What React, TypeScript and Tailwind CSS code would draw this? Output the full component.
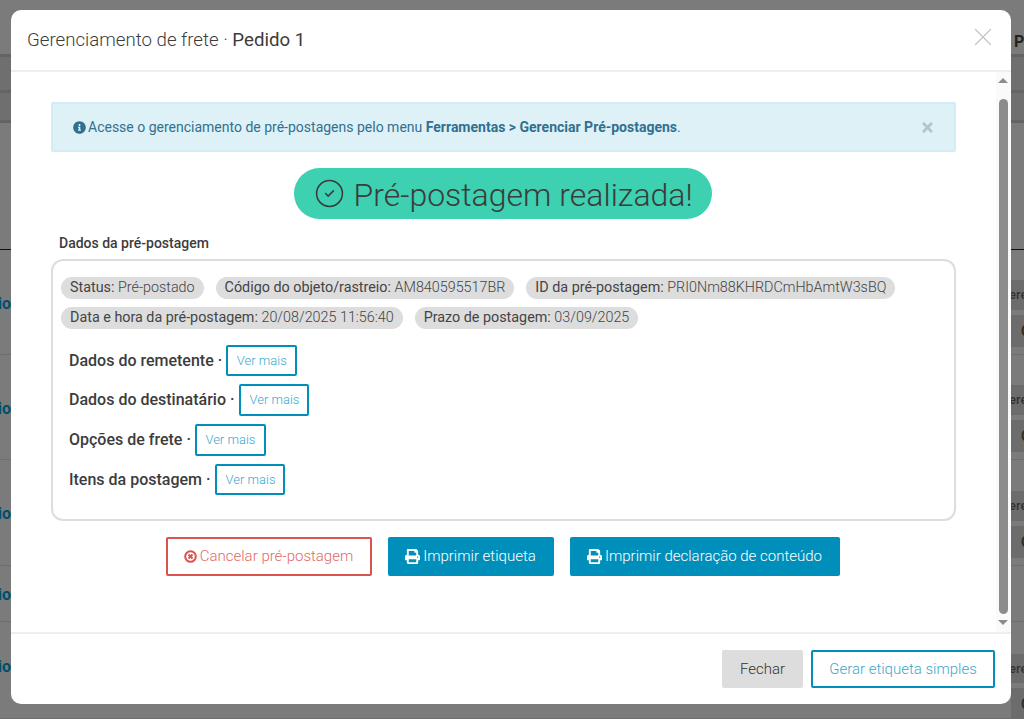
import React from 'react';
import { X, CircleCheck } from 'lucide-react';
import { FaInfoCircle, FaPrint, FaTimes } from 'react-icons/fa';

const BLUE_OUTLINE = 'border-2 border-[#008fbb] rounded-[2px] bg-white text-[#3ba8cd] font-light';

// page behind the overlay, only the strips at the sides stay visible
const backRows = [
  { h: 'h-[47px]', line: 'border-b-[3px] border-[#646464]' },
  { h: 'h-[36px]', line: 'border-b-[3px] border-[#646464] bg-[#6f6f6f]' },
  { h: 'h-[30px]', line: 'border-b-[3px] border-[#646464] bg-[#6f6f6f]' },
  { h: 'h-[73px]', line: 'border-b border-[#7c7c7c]' },
  { h: 'h-[54px]', line: 'border-b border-[#111]' },
];

const tableRows = [
  { h: 'h-[105px]', left: 'pt-[44px]', ere: 'mt-[30px]' },
  { h: 'h-[105px]', left: 'pt-[44px]', ere: 'mt-[30px]' },
  { h: 'h-[106px]', left: 'pt-[44px]', ere: 'mt-[31px]' },
  { h: 'h-[56px]', left: 'pt-[19px]', ere: '' },
  { h: 'h-[97px]', left: 'pt-[35px]', ere: 'mt-[32px]' },
];

const Background: React.FC = () => (
  <div className="h-full overflow-hidden bg-[#7b7b7b]">
    <div className="h-[10px]" />
    {backRows.map((r, i) => (
      <div key={i} className={`${r.h} ${r.line} flex justify-end`}>
        {i === 0 && <span className="mt-[22px] w-[10px] overflow-hidden text-[16px] leading-[20px] font-bold text-[#222]">P</span>}
      </div>
    ))}
    {tableRows.map((r, i) => (
      <div key={i} className={`${r.h} border-b border-[#6e6e6e] flex justify-between`}>
        <div className={`${r.left} w-[11px] overflow-hidden flex justify-end`}>
          <span className="text-[16px] leading-[20px] font-bold text-[#004f6b]">io</span>
        </div>
        {r.ere && (
          <div className={`${r.ere} w-[13px] flex flex-col gap-[5px]`}>
            <div className="h-[30px] bg-[#6c6c6c] overflow-hidden text-[13px] leading-[30px] font-medium text-[#333]">
              <span className="-ml-[2px] block">ere</span>
            </div>
            <div className="h-[32px] bg-[#6c6c6c] pl-[10px] overflow-hidden text-[14px] leading-[32px] font-bold text-[#332c24]">C</div>
          </div>
        )}
      </div>
    ))}
  </div>
);

const Chip: React.FC<{ label: string; value: string }> = ({ label, value }) => (
  <span className="h-[22px] rounded-full bg-[#dddddd] px-[9px] text-[14.34px] leading-[21px] text-[#444] whitespace-nowrap">
    {label} <span className="font-light">{value}</span>
  </span>
);

const DataRow: React.FC<{ label: string; btn: string }> = ({ label, btn }) => (
  <div className="flex items-center text-[16px] font-medium text-[#3c3c3c]">
    <span className="whitespace-pre">{label} · </span>
    <button className={`${BLUE_OUTLINE} ${btn} text-[13px]`}>Ver mais</button>
  </div>
);

const App: React.FC = () => {
  return (
    <div className="relative h-[719px] w-[1024px] overflow-hidden font-['Roboto',sans-serif]">
      <Background />

      {/* modal */}
      <div className="absolute left-[11px] top-[10px] flex h-[694px] w-[1000px] flex-col rounded-[10px] bg-white">
        <div className="flex h-[62px] shrink-0 items-center justify-between border-b-2 border-[#eeeeee] pl-[16px] pr-[13px]">
          <h4 className="text-[18.67px] font-light text-[#3c3c3c]">
            Gerenciamento de frete · <span className="font-normal">Pedido 1</span>
          </h4>
          <X size={30} strokeWidth={1} className="mb-[6px] text-[#c4c4c4]" />
        </div>

        <div className="flex min-h-0 flex-1">
          <div className="min-w-0 flex-1 pl-[40px] pr-[40px] pt-[30px]">
            <div className="flex h-[50px] items-center justify-between rounded-[2px] border-2 border-[#d3ecf6] bg-[#def1f7] pl-[20px] pr-[19px] text-[14px] text-[#31708f]">
              <span className="flex items-center">
                <FaInfoCircle size={13} className="mr-[2px]" />
                <span>Acesse o gerenciamento de pré-postagens pelo menu <b className="font-bold">Ferramentas &gt; Gerenciar Pré-postagens</b>.</span>
              </span>
              <FaTimes size={15} className="text-[#b9c3c7]" />
            </div>

            <div className="mt-[16px] flex justify-center pr-[2px]">
              <div className="flex h-[51px] w-[418px] items-center rounded-full bg-[#3dd0b1] pl-[20px] text-[32px] font-light text-[#3c3c3c]">
                <CircleCheck size={31} strokeWidth={1.2} className="mr-[9px] mb-[1px]" />
                <span className="mt-[3px]">Pré-postagem realizada!</span>
              </div>
            </div>

            <p className="ml-[8px] mt-[15px] text-[14px] leading-[18px] font-medium text-[#3c3c3c]">Dados da pré-postagem</p>

            <div className="mt-[7px] h-[262px] rounded-[12px] border-2 border-[#dddddd] pl-[8px] pr-[8px] pt-[16px]">
              <div className="flex flex-wrap gap-x-[12px] gap-y-[8px]">
                <Chip label="Status:" value="Pré-postado" />
                <Chip label="Código do objeto/rastreio:" value="AM840595517BR" />
                <Chip label="ID da pré-postagem:" value="PRI0Nm88KHRDCmHbAmtW3sBQ" />
                <Chip label="Data e hora da pré-postagem:" value="20/08/2025 11:56:40" />
                <Chip label="Prazo de postagem:" value="03/09/2025" />
              </div>
              <div className="ml-[8px] mt-[16px] flex flex-col gap-[8px]">
                <DataRow label="Dados do remetente" btn="h-[31px] w-[71px]" />
                <DataRow label="Dados do destinatário" btn="h-[32px] w-[70px] ml-[1px]" />
                <DataRow label="Opções de frete" btn="h-[32px] w-[71px]" />
                <DataRow label="Itens da postagem" btn="h-[31px] w-[70px] ml-[1px]" />
              </div>
            </div>

            <div className="mt-[16px] flex justify-center gap-[16px] pr-[2px]">
              <button className="flex h-[39px] w-[206px] items-center justify-center rounded-[2px] border-2 border-[#d9534f] text-[15px] font-light text-[#df6b67]">
                <svg width="13" height="13" viewBox="0 0 13 13" className="mr-[3px]">
                  <circle cx="6.5" cy="6.5" r="5.3" fill="none" stroke="#d9534f" strokeWidth="2" />
                  <path d="M4.5 4.5 8.5 8.5M8.5 4.5 4.5 8.5" stroke="#d9534f" strokeWidth="2" />
                </svg>
                Cancelar pré-postagem
              </button>
              <button className="flex h-[39px] w-[166px] items-center justify-center rounded-[2px] bg-[#008fbb] text-[15px] font-light text-white">
                <FaPrint size={15} className="mr-[3px]" />
                Imprimir etiqueta
              </button>
              <button className="flex h-[39px] w-[270px] items-center justify-center rounded-[2px] bg-[#008fbb] text-[15px] font-light text-white">
                <FaPrint size={15} className="mr-[3px]" />
                Imprimir declaração de conteúdo
              </button>
            </div>
          </div>

          {/* scrollbar */}
          <div className="flex w-[15px] shrink-0 flex-col items-center bg-[#fafafa] pr-[1px]">
            <svg width="10" height="5" viewBox="0 0 10 5" className="mt-[6px]"><path d="M5 0 10 5H0Z" fill="#8c8c8c" /></svg>
            <div className="mt-[16px] h-[515px] w-[9px] rounded-full bg-[#8c8c8c]" />
            <svg width="10" height="5" viewBox="0 0 10 5" className="mt-[6px]"><path d="M0 0H10L5 5Z" fill="#8c8c8c" /></svg>
          </div>
        </div>

        <div className="flex h-[72px] shrink-0 items-start justify-end gap-[8px] border-t-2 border-[#eeeeee] pr-[16px] pt-[16px]">
          <button className="h-[38px] w-[81px] rounded-[2px] bg-[#dddddd] text-[15px] font-light text-[#333]">Fechar</button>
          <button className={`${BLUE_OUTLINE} h-[38px] w-[184px] text-[15px]`}>Gerar etiqueta simples</button>
        </div>
      </div>
    </div>
  );
};

export default App;
